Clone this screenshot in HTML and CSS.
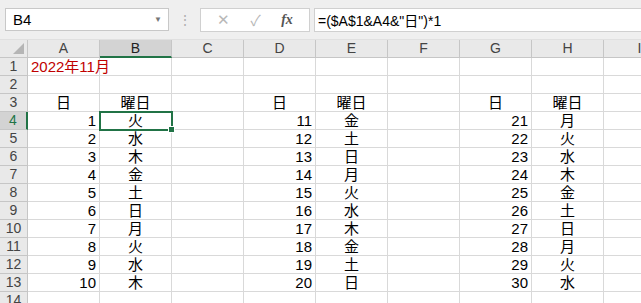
FILE: index.html
```html
<!DOCTYPE html>
<html lang="ja">
<head>
  <meta charset="UTF-8">
  <title>2022年11月</title>
  <link rel="stylesheet" href="styles.css">
</head>
<body>
  <div class="toolbar">
    <div class="name-box">B4<span class="drop">▼</span></div>
    <div class="dots">⋮</div>
    <div class="fx-buttons">
      <span class="btn">✕</span>
      <span class="btn">✓</span>
      <span class="btn fx">fx</span>
    </div>
    <div class="formula">=($A$1&amp;A4&amp;"日")*1</div>
  </div>

  <div class="sheet" id="sheet"></div>

  <script>
    // 列と曜日のデータ
    const cols = ['A', 'B', 'C', 'D', 'E', 'F', 'G', 'H', 'I'];
    const week = ['日', '月', '火', '水', '木', '金', '土'];
    const sheet = document.getElementById('sheet');

    function cell(text, cls) {
      const div = document.createElement('div');
      div.className = cls;
      div.textContent = text;
      sheet.appendChild(div);
      return div;
    }

    // 列見出し
    cell('', 'corner');
    cols.forEach(c => cell(c, c === 'B' ? 'col-head active' : 'col-head'));

    for (let r = 1; r <= 14; r++) {
      cell(r, r === 4 ? 'row-head active' : 'row-head');
      cols.forEach((c, i) => {
        let text = '';
        let cls = 'cell';
        if (r === 1 && c === 'A') { text = '2022年11月'; cls += ' title'; }
        if (r === 3) {
          if (c === 'A' || c === 'D' || c === 'G') { text = '日'; cls += ' center'; }
          if (c === 'B' || c === 'E' || c === 'H') { text = '曜日'; cls += ' center'; }
        }
        if (r >= 4 && r <= 13) {
          const block = ['A', 'D', 'G'].indexOf(c);
          const dayBlock = ['B', 'E', 'H'].indexOf(c);
          if (block >= 0) { text = (r - 3) + block * 10; cls += ' num'; }
          if (dayBlock >= 0) {
            const day = (r - 3) + dayBlock * 10;
            text = week[(day + 1) % 7];
            cls += ' center';
          }
        }
        const div = cell(text, cls);
        if (r === 4 && c === 'B') div.classList.add('selected');
      });
    }
  </script>
</body>
</html>
```

FILE: styles.css
```css
body {
  margin: 0;
  width: 641px;
  height: 303px;
  overflow: hidden;
  background: #ffffff;
  font-family: "Liberation Sans", "Noto Sans CJK JP", sans-serif;
  color: #000;
}
.toolbar {
  height: 40px;
  background: #efefef;
  display: flex;
  align-items: center;
  padding-left: 5px;
  box-sizing: border-box;
  border-bottom: 1px solid #e0e0e0;
}
.name-box {
  width: 164px;
  height: 23px;
  box-sizing: border-box;
  border: 1px solid #c8c8c8;
  background: #fff;
  display: flex;
  align-items: center;
  justify-content: space-between;
  padding: 0 6px 0 7px;
  font-size: 15px;
}
.name-box .drop {
  font-size: 8px;
  color: #777;
}
.dots {
  width: 31px;
  text-align: center;
  color: #b0b0b0;
  font-size: 14px;
}
.fx-buttons {
  width: 110px;
  height: 24px;
  box-sizing: border-box;
  border: 1px solid #d0d0d0;
  background: #fff;
  display: flex;
  align-items: center;
  justify-content: space-around;
  padding: 0 6px;
}
.fx-buttons .btn {
  color: #b8b8b8;
  font-size: 15px;
}
.fx-buttons .fx {
  font-family: "Liberation Serif", serif;
  font-style: italic;
  color: #555;
  font-size: 14px;
  font-weight: bold;
}
.formula {
  flex: 1;
  height: 24px;
  margin-left: 4px;
  box-sizing: border-box;
  border: 1px solid #d0d0d0;
  border-right: none;
  background: #fff;
  display: flex;
  align-items: center;
  padding-left: 3px;
  font-size: 14px;
}
.sheet {
  display: grid;
  grid-template-columns: 28px repeat(9, 72px);
  grid-auto-rows: 18px;
  font-size: 15px;
  line-height: 17px;
}
.corner,
.col-head,
.row-head {
  background: #e9e9e9;
  color: #444;
  font-size: 14px;
  box-sizing: border-box;
  border-right: 1px solid #c6c6c6;
  border-bottom: 1px solid #c6c6c6;
  text-align: center;
  position: relative;
}
.corner::after {
  content: "";
  position: absolute;
  right: 3px;
  bottom: 3px;
  border-style: solid;
  border-width: 0 0 11px 11px;
  border-color: transparent transparent #b5b5b5 transparent;
}
.col-head.active {
  background: #d3d3d3;
  color: #222;
  border-bottom: 2px solid #217346;
}
.row-head.active {
  background: #d3d3d3;
  color: #217346;
  border-right: 2px solid #217346;
}
.cell {
  box-sizing: border-box;
  border-right: 1px solid #d9d9d9;
  border-bottom: 1px solid #d9d9d9;
  white-space: nowrap;
  padding: 0 3px;
  position: relative;
}
.cell.title {
  color: #c00000;
  overflow: visible;
  z-index: 1;
}
.cell.num {
  text-align: right;
}
.cell.center {
  text-align: center;
}
.cell.selected {
  outline: 2px solid #217346;
  outline-offset: -1px;
  z-index: 2;
}
.cell.selected::after {
  content: "";
  position: absolute;
  right: -4px;
  bottom: -4px;
  width: 5px;
  height: 5px;
  background: #217346;
  border: 1px solid #fff;
}
```
